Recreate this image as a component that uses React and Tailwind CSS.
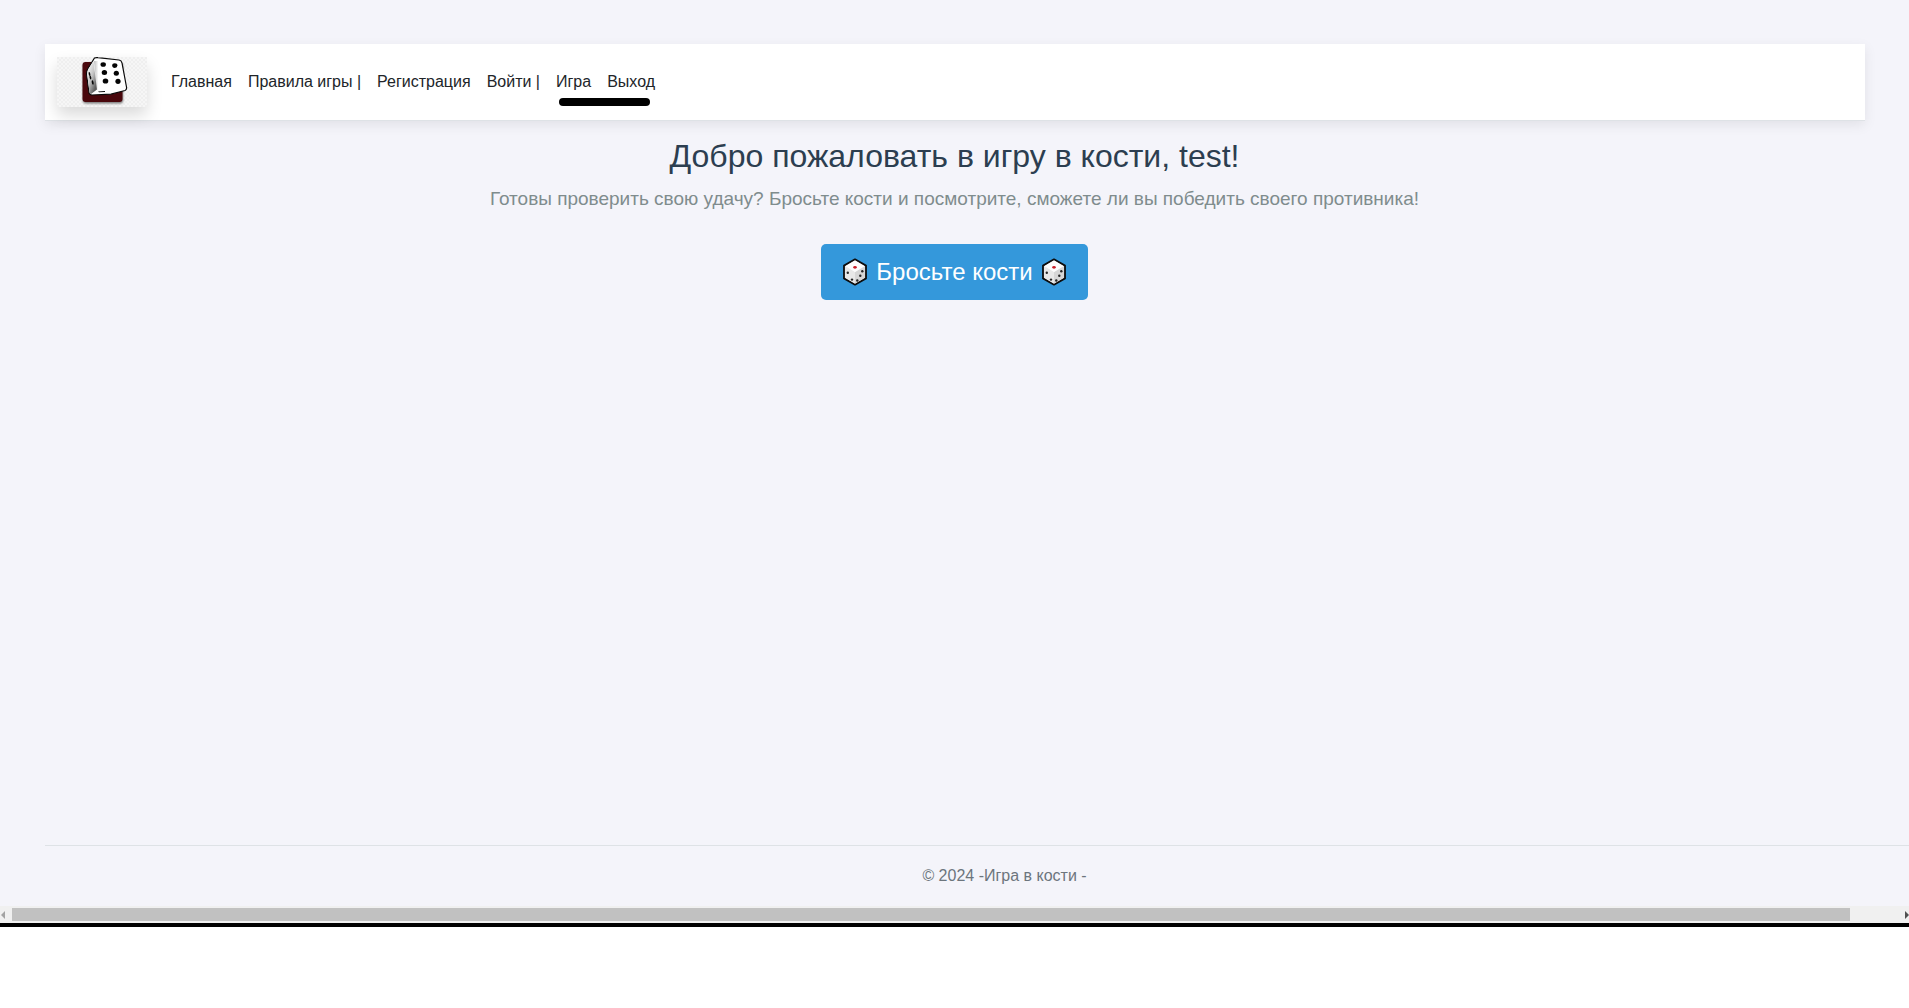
const links = ['Главная', 'Правила игры |', 'Регистрация', 'Войти |', 'Игра', 'Выход'];

function Logo() {
  return (
    <svg viewBox="0 0 90 50" className="block h-[50px] w-[90px]" role="img" aria-label="Игра в кости">
      <defs>
        <pattern id="checks" width="4" height="4" patternUnits="userSpaceOnUse">
          <rect width="4" height="4" fill="#f6f6f6" />
          <rect width="2" height="2" fill="#efefef" />
          <rect x="2" y="2" width="2" height="2" fill="#efefef" />
        </pattern>
        <linearGradient id="side" x1="0" y1="0.2" x2="0.6" y2="1">
          <stop offset="0" stopColor="#f4f4f4" />
          <stop offset="0.5" stopColor="#c4c4c4" />
          <stop offset="1" stopColor="#5e5e5e" />
        </linearGradient>
        <linearGradient id="front" x1="0" y1="0" x2="1" y2="0">
          <stop offset="0" stopColor="#bdbdbd" />
          <stop offset="0.3" stopColor="#ffffff" />
        </linearGradient>
        <filter id="soft" x="-20%" y="-20%" width="140%" height="140%">
          <feGaussianBlur stdDeviation="0.8" />
        </filter>
      </defs>
      <rect width="90" height="50" fill="url(#checks)" />
      <rect x="26" y="6" width="40" height="40.500" rx="3" fill="#777" filter="url(#soft)" />
      <rect x="25.500" y="5" width="40" height="40" rx="3" fill="#4a080d" />
      <path d="M37.500 1 Q39 .4 41 .7 L62 3 Q64.500 3.400 65 6 L69.500 30 Q70 32.500 68 33.500 L54 37.200 L35 38 Q32.500 38 32 36 L29.500 17 Q29.500 14 31 11.500 Z" fill="#fff" stroke="#0a0a0a" strokeWidth="1.200" />
      <path d="M37 4 L50 4 L52 32 L40 33 Z" fill="url(#front)" />
      <path d="M36.500 4 L40 32.500 L34 37 Q32.800 37 32.500 35.500 L30.200 17 Q30.200 14 31.500 12 Z" fill="url(#side)" />
      <g fill="#050505">
        <ellipse cx="46.200" cy="7.500" rx="2.700" ry="2.300" />
        <ellipse cx="57.800" cy="8.600" rx="2.600" ry="2.300" />
        <ellipse cx="47.400" cy="15.500" rx="2.700" ry="2.500" />
        <ellipse cx="59.300" cy="16.300" rx="2.600" ry="2.500" />
        <ellipse cx="48.500" cy="24" rx="2.800" ry="2.600" />
        <ellipse cx="61" cy="24.300" rx="2.600" ry="2.600" />
        <ellipse cx="32.500" cy="17" rx=".8" ry="2" transform="rotate(-12 32.500 17)" />
        <ellipse cx="33.400" cy="20.500" rx=".8" ry="2" transform="rotate(-12 33.400 20.500)" />
        <ellipse cx="35.700" cy="25.500" rx=".9" ry="2.200" transform="rotate(-12 35.700 25.500)" />
        <path d="M41 34.500 L48 34 L48 35 L42 35.300 Z" />
      </g>
    </svg>
  );
}

function Die() {
  return (
    <svg viewBox="0 0 26 28" className="h-7 w-[26px]" aria-hidden="true">
      <path d="M13 1.300 L24 7.600 V20.400 L13 26.700 L2 20.400 V7.600 Z" fill="#e3e3e3" stroke="#0c0c0c" strokeWidth="1.800" strokeLinejoin="round" />
      <path d="M13 2.600 L22.800 8.300 L13 14.300 L3.200 8.300 Z" fill="#fdfdfd" />
      <path d="M13 14.300 L22.900 8.300 V19.800 L13 25.500 Z" fill="#d6d6d6" />
      <path d="M3.100 8.300 L13 14.300 V25.500 L3.100 19.800 Z" fill="#e8e8e8" />
      <ellipse cx="13" cy="9.300" rx="1.800" ry="1.400" fill="#c81e28" />
      <g fill="#262626">
        <circle cx="5.800" cy="14.800" r="1.200" />
        <circle cx="10" cy="21.600" r="1.200" />
        <circle cx="20.300" cy="13.200" r="1.200" />
        <circle cx="18.300" cy="17.800" r="1.200" />
        <circle cx="15.300" cy="22.500" r="1.200" />
      </g>
    </svg>
  );
}

export default function App() {
  return (
    <div className="flex min-h-screen flex-col bg-white font-['Liberation_Sans',Arial,sans-serif] text-base text-[#212529]">
      <div className="flex h-[906px] flex-col overflow-hidden bg-[#f4f4fa] pt-11">
        <header className="mx-11 ml-[45px] flex items-center border-b border-[#dee2e6] bg-white px-3 py-[13px] shadow-[0_4px_12px_rgba(0,0,0,0.08)]">
          <a href="#home" className="mr-4 rounded-sm shadow-[0_8px_16px_rgba(0,0,0,0.15)]">
            <Logo />
          </a>
          <nav className="relative flex">
            {links.map((label) => (
              <a key={label} href="#page" className="px-2 py-2 leading-6 whitespace-nowrap">
                {label}
              </a>
            ))}
            <span className="absolute right-[13px] -bottom-1 h-2 w-[91px] rounded-sm bg-black" />
          </nav>
        </header>

        <main className="flex grow flex-col items-center text-center">
          <h1 className="mt-[15px] text-[32px] leading-10 text-[#2c3e50]">Добро пожаловать в игру в кости, test!</h1>
          <p className="mt-[9px] text-[19px] leading-7 text-[#7f8c8d]">
            Готовы проверить свою удачу? Бросьте кости и посмотрите, сможете ли вы победить своего противника!
          </p>
          <button type="button" className="mt-[31px] flex h-14 items-center gap-2 rounded-[5px] bg-[#3498db] px-[21px] text-2xl text-white">
            <Die />
            Бросьте кости
            <Die />
          </button>
        </main>

        <footer className="ml-[45px] border-t border-[#dee2e6] pl-[55px] text-center leading-[60px] text-[#6c757d]">
          © 2024 -Игра в кости -
        </footer>
      </div>

      <div className="flex h-[17px] items-center justify-between bg-[#f0f0f0]">
        <svg viewBox="0 0 6 8" className="h-2 w-1.5" aria-hidden="true">
          <path d="M5 0 V8 L1 4 Z" fill="#a3a3a3" />
        </svg>
        <div className="mr-[55px] ml-1.5 h-[13px] grow bg-[#c1c1c1]" />
        <svg viewBox="0 0 4 8" className="h-2 w-1" aria-hidden="true">
          <path d="M0 0 V8 L4 4 Z" fill="#505050" />
        </svg>
      </div>
      <div className="h-1 bg-black" />
    </div>
  );
}
